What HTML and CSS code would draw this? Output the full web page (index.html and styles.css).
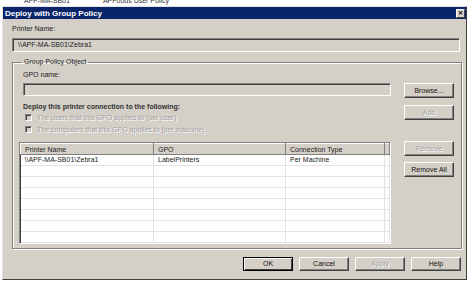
FILE: index.html
```html
<!DOCTYPE html>
<html>
	<head>
		<meta charset="UTF-8">
		<title>Deploy with Group Policy</title>
		<link rel="stylesheet" href="styles.css">
	</head>
	<body>
		<div class="backdrop">
			<span>APF-MA-SB01</span>
			<span>APFoods User Policy</span>
		</div>
		<div class="dialog">
			<div class="titlebar">
				<span class="title">Deploy with Group Policy</span>
				<span class="close">&#x2715;</span>
			</div>
			<div class="content">
				<div class="label">Printer Name:</div>
				<div class="field printer">\\APF-MA-SB01\Zebra1</div>

				<fieldset class="group">
					<legend>Group Policy Object</legend>
					<div class="label indent">GPO name:</div>
					<div class="row">
						<div class="field gpo"></div>
						<span class="btn">Browse...</span>
					</div>
					<div class="row">
						<div class="deploy">
							<div class="label strong">Deploy this printer connection to the following:</div>
							<label class="check"><span class="box"></span>The users that this GPO applies to (per user)</label>
							<label class="check"><span class="box"></span>The computers that this GPO applies to (per machine)</label>
						</div>
						<span class="btn off add">Add</span>
					</div>
					<div class="row list-row">
						<div class="listview">
							<table>
								<thead>
									<tr><th class="c1">Printer Name</th><th class="c2">GPO</th><th class="c3">Connection Type</th><th class="c4"></th></tr>
								</thead>
								<tbody>
									<tr><td>\\APF-MA-SB01\Zebra1</td><td>LabelPrinters</td><td>Per Machine</td><td></td></tr>
									<tr><td></td><td></td><td></td><td></td></tr>
									<tr><td></td><td></td><td></td><td></td></tr>
									<tr><td></td><td></td><td></td><td></td></tr>
									<tr><td></td><td></td><td></td><td></td></tr>
									<tr><td></td><td></td><td></td><td></td></tr>
									<tr><td></td><td></td><td></td><td></td></tr>
									<tr><td></td><td></td><td></td><td></td></tr>
								</tbody>
							</table>
						</div>
						<div class="side">
							<span class="btn off">Remove</span>
							<span class="btn">Remove All</span>
						</div>
					</div>
				</fieldset>

				<div class="footer">
					<span class="btn default">OK</span>
					<span class="btn">Cancel</span>
					<span class="btn off">Apply</span>
					<span class="btn">Help</span>
				</div>
			</div>
		</div>
	</body>
</html>
```

FILE: styles.css
```css
body{
    margin: 0;
    background: #fff;
    font-family: "Liberation Sans", Arial, sans-serif;
    font-size: 7px;
    color: #222;
}
.backdrop{
    display: flex;
    align-items: flex-end;
    gap: 33px;
    height: 6px;
    padding-left: 24px;
    overflow: hidden;
}
.backdrop span{
    line-height: 10px;
    color: #333;
}
.dialog{
    display: flex;
    flex-direction: column;
    box-sizing: border-box;
    width: 465px;
    height: 274px;
    margin-left: 2px;
    border: 1px solid;
    border-color: #e4e2dc #404040 #404040 #e4e2dc;
    background: #d4d0c8;
}
.titlebar{
    display: flex;
    align-items: center;
    justify-content: space-between;
    height: 12px;
    padding: 0 1px 0 2px;
    background: #0a246a;
}
.title{
    font-size: 8px;
    font-weight: bold;
    color: #fff;
}
.close{
    box-sizing: border-box;
    width: 9px;
    height: 9px;
    border: 1px solid;
    border-color: #fff #404040 #404040 #fff;
    background: #d4d0c8;
    font-size: 6px;
    font-weight: bold;
    line-height: 7px;
    text-align: center;
    color: #000;
}
.content{
    display: flex;
    flex-direction: column;
    padding: 5px 6px 0 9px;
}
.label{
    line-height: 9px;
}
.strong{
    font-weight: bold;
    color: #333;
}
.field{
    box-sizing: border-box;
    border: 1px solid;
    border-color: #808080 #fff #fff #808080;
    box-shadow: inset 1px 1px #404040, inset -1px -1px #d4d0c8;
    background: #d4d0c8;
}
.printer{
    height: 14px;
    margin-top: 5px;
    padding-left: 5px;
    line-height: 12px;
}
.group{
    margin: 5px -2px 0 0;
    padding: 3px 7px 4px 6px;
    border: 1px solid #808080;
    box-shadow: 1px 1px #fff, inset 1px 1px #fff;
    min-inline-size: 0;
}
.group legend{
    padding: 0 2px;
    margin-left: 3px;
    line-height: 10px;
}
.indent{
    margin-left: 4px;
}
.row{
    display: flex;
    justify-content: space-between;
    align-items: flex-start;
}
.gpo{
    width: 368px;
    height: 13px;
    margin: 4px 0 0 4px;
}
.btn{
    box-sizing: border-box;
    width: 50px;
    height: 15px;
    border: 1px solid;
    border-color: #fff #404040 #404040 #fff;
    box-shadow: inset -1px -1px #808080;
    background: #d4d0c8;
    line-height: 13px;
    text-align: center;
    color: #111;
}
.row .btn{
    margin-top: 4px;
}
.off{
    color: #a0a0a0;
    text-shadow: 1px 1px #fff;
}
.deploy{
    margin: 4px 0 0 4px;
}
.check{
    display: flex;
    align-items: center;
    gap: 5px;
    margin-left: 2px;
    line-height: 13px;
    color: #a0a0a0;
    text-shadow: 1px 1px #fff;
}
.check + .check{
    margin-top: -1px;
}
.box{
    box-sizing: border-box;
    width: 7px;
    height: 7px;
    border: 1px solid;
    border-color: #808080 #fff #fff #808080;
    box-shadow: inset 1px 1px #404040;
    background: #d4d0c8;
}
.add{
    margin-top: 7px !important;
}
.list-row{
    margin-top: 6px;
}
.listview{
    box-sizing: border-box;
    width: 372px;
    height: 102px;
    border: 1px solid;
    border-color: #808080 #fff #fff #808080;
    box-shadow: inset 1px 1px #404040;
    background: #fff;
    overflow: hidden;
}
.listview table{
    border-collapse: collapse;
    table-layout: fixed;
    width: 370px;
}
.listview th{
    box-sizing: border-box;
    height: 11px;
    padding: 0 0 0 4px;
    border: 1px solid;
    border-color: #fff #808080 #808080 #fff;
    background: #d4d0c8;
    font-weight: normal;
    line-height: 9px;
    text-align: left;
}
.listview td{
    height: 10px;
    padding: 0 0 0 4px;
    border-right: 1px solid #e3e3e3;
    border-bottom: 1px solid #e3e3e3;
    line-height: 10px;
    white-space: nowrap;
}
.c1{
    width: 133px;
}
.c2{
    width: 132px;
}
.c3{
    width: 99px;
}
.side{
    display: flex;
    flex-direction: column;
    gap: 6px;
    margin-top: -1px;
}
.side .btn{
    margin-top: 0;
}
.footer{
    display: flex;
    justify-content: flex-end;
    gap: 6px;
    margin: 8px -1px 0 0;
}
.footer .btn{
    height: 14px;
    line-height: 12px;
}
.default{
    border-color: #000;
    box-shadow: inset 1px 1px #fff, inset -1px -1px #404040;
}
```
